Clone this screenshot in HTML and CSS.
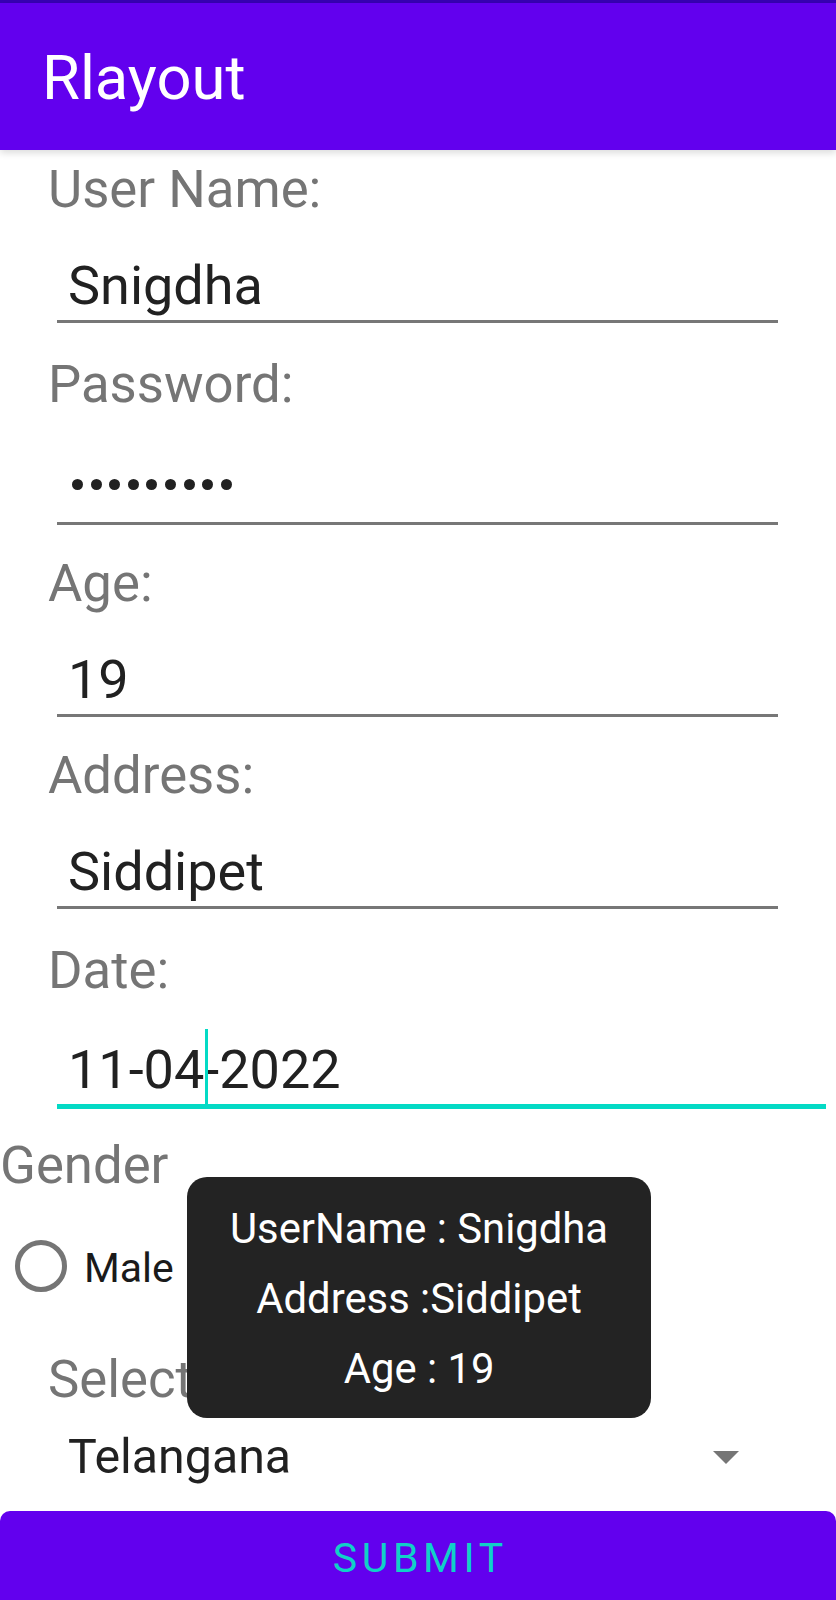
FILE: index.html
```html
<!DOCTYPE html>
<html>
<head>
<meta charset="utf-8">
<title>Rlayout</title>
<link rel="stylesheet" href="styles.css">
</head>
<body>
<div class="status"></div>
<header class="toolbar"><span class="title">Rlayout</span></header>
<main class="form">
  <div class="field f1">
    <div class="label">User Name:</div>
    <div class="input">Snigdha</div>
  </div>
  <div class="field f2">
    <div class="label">Password:</div>
    <div class="input pw"><div class="dots"><span></span><span></span><span></span><span></span><span></span><span></span><span></span><span></span><span></span></div></div>
  </div>
  <div class="field f3">
    <div class="label">Age:</div>
    <div class="input">19</div>
  </div>
  <div class="field f4">
    <div class="label">Address:</div>
    <div class="input">Siddipet</div>
  </div>
  <div class="field f5">
    <div class="label">Date:</div>
    <div class="input focused">11-04<span class="caret"></span>-2022</div>
  </div>
  <div class="gender">Gender</div>
  <div class="radio-row">
    <span class="radio"></span>
    <span class="radio-text">Male</span>
  </div>
  <div class="label select-label">Select</div>
  <div class="spinner">
    <span class="spinner-text">Telangana</span>
    <span class="arrow"></span>
  </div>
  <div class="submit">SUBMIT</div>
</main>
<div class="toast">
  <div>UserName : Snigdha</div>
  <div>Address :Siddipet</div>
  <div>Age : 19</div>
</div>
</body>
</html>
```

FILE: styles.css
```css
html, body {
  margin: 0;
  padding: 0;
  height: 1600px;
  overflow: hidden;
  background: #ffffff;
}
body {
  position: relative;
  font-family: Roboto, "Noto Sans", "Liberation Sans", sans-serif;
}
.status {
  height: 3px;
  background: #3700B3;
}
.toolbar {
  position: relative;
  z-index: 2;
  height: 147px;
  background: #6200EE;
  box-shadow: 0 3px 7px rgba(0, 0, 0, 0.14);
}
.title {
  display: block;
  padding: 40px 0 0 42px;
  font-size: 61.5px;
  line-height: 70px;
  font-weight: 400;
  color: #ffffff;
}
.form {
  padding-top: 9px;
}
.field {
  margin-top: 31px;
}
.field.f1 {
  margin-top: 0;
}
.field.f3,
.field.f4 {
  margin-top: 28px;
}
.label {
  margin-left: 48px;
  font-size: 52.7px;
  line-height: 60px;
  color: #757575;
}
.input {
  box-sizing: border-box;
  margin-left: 57px;
  width: 721px;
  padding: 37px 0 4px 11px;
  font-size: 54px;
  line-height: 60px;
  color: #212121;
  border-bottom: 3px solid #777777;
}
.input.pw {
  padding-bottom: 11px;
}
.dots {
  display: flex;
  align-items: center;
  gap: 7.6px;
  height: 60px;
  padding: 6px 0 0 4px;
  box-sizing: border-box;
}
.dots span {
  width: 11px;
  height: 11px;
  border-radius: 50%;
  background: #212121;
}
.input.focused {
  width: 769px;
  padding-top: 40px;
  border-bottom: 5px solid #03DAC5;
}
.caret {
  position: relative;
  display: inline-block;
  width: 0;
  height: 60px;
  vertical-align: top;
}
.caret::after {
  content: "";
  position: absolute;
  left: 1px;
  top: -11px;
  width: 3px;
  height: 76px;
  background: #03DAC5;
}
.gender {
  margin-top: 26px;
  font-size: 52.7px;
  line-height: 60px;
  color: #757575;
}
.radio-row {
  display: flex;
  align-items: center;
  height: 60px;
  margin-top: 41px;
}
.radio {
  box-sizing: border-box;
  width: 52px;
  height: 52px;
  margin-left: 15px;
  border: 5px solid #757575;
  border-radius: 50%;
}
.radio-text {
  margin-left: 17px;
  padding-top: 4px;
  font-size: 41px;
  line-height: 60px;
  color: #1a1a1a;
}
.select-label {
  margin-top: 53px;
}
.spinner {
  display: flex;
  align-items: center;
  justify-content: space-between;
  box-sizing: border-box;
  width: 743px;
  height: 60px;
  margin: 18px 0 0 46px;
  padding: 0 50px 0 22px;
}
.spinner-text {
  font-size: 48.3px;
  line-height: 60px;
  color: #212121;
}
.arrow {
  width: 0;
  height: 0;
  border-left: 13px solid transparent;
  border-right: 13px solid transparent;
  border-top: 13px solid #757575;
}
.submit {
  height: 120px;
  margin-top: 24px;
  box-sizing: border-box;
  padding: 22px 0 0 4.6px;
  background: #6200EE;
  border-radius: 10px;
  text-align: center;
  font-size: 41px;
  line-height: 50px;
  font-weight: 400;
  letter-spacing: 4.6px;
  color: #10D0C8;
}
.toast {
  position: absolute;
  left: 187px;
  top: 1177px;
  padding: 17px 43px 14px;
  background: #232323;
  border-radius: 20px;
  text-align: center;
  font-size: 41.8px;
  line-height: 70px;
  color: #ffffff;
  white-space: nowrap;
}
```
